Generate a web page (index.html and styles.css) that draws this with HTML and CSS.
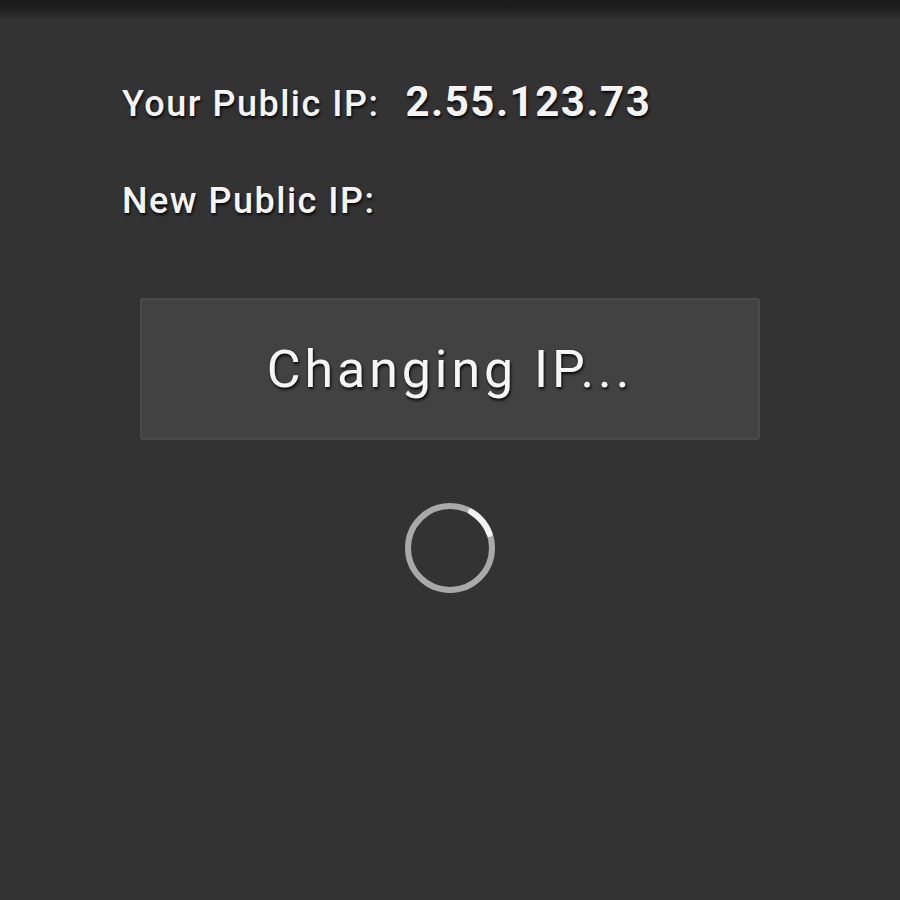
FILE: index.html
```html
<!DOCTYPE html>
<html>
<head>
<meta charset="utf-8">
<link rel="stylesheet" href="styles.css">
</head>
<body>
<div class="statusbar"></div>
<main class="content">
  <div class="row row-first">
    <span class="label">Your Public IP:</span>
    <span class="ip">2.55.123.73</span>
  </div>
  <div class="row row-second">
    <span class="label">New Public IP:</span>
  </div>
  <div class="button-wrap">
    <div class="button">Changing IP...</div>
  </div>
  <div class="spinner-wrap">
    <svg class="spinner" width="100" height="100" viewBox="0 0 100 100">
      <circle cx="50" cy="50" r="42" fill="none" stroke="#a9a9a9" stroke-width="6"/>
      <path d="M 71 13.6 A 42 42 0 0 1 89.5 36" fill="none" stroke="#f2f2f2" stroke-width="6" stroke-linecap="round"/>
    </svg>
  </div>
</main>
</body>
</html>
```
FILE: styles.css
```css
html, body {
  margin: 0;
  padding: 0;
  background: #333333;
  width: 900px;
  height: 900px;
  overflow: hidden;
}
body {
  font-family: Roboto, "Noto Sans", sans-serif;
  color: #f4f4f4;
}
.statusbar {
  height: 20px;
  background: linear-gradient(to bottom, #1c1c1c 0px, #1d1d1d 8px, #333333 20px);
}
.content {
  padding-left: 122px;
}
.row {
  display: flex;
  align-items: baseline;
  text-shadow: 1px 2px 3px rgba(0,0,0,0.9);
}
.row-first {
  margin-top: 57px;
  height: 48px;
}
.row-second {
  margin-top: 55px;
  height: 48px;
}
.label {
  font-size: 36px;
  letter-spacing: 1.5px;
  font-weight: 500;
}
.ip {
  font-size: 42px;
  font-weight: bold;
  letter-spacing: 1.5px;
  margin-left: 26px;
}
.button-wrap {
  margin-top: 70px;
  padding-left: 18px;
}
.button {
  width: 620px;
  height: 142px;
  background: #424242;
  border: 2px solid #4a4a4a;
  border-radius: 3px;
  display: flex;
  align-items: center;
  justify-content: center;
  font-size: 52px;
  letter-spacing: 3.9px;
  color: #f6f6f6;
  text-shadow: 1px 2px 3px rgba(0,0,0,0.9);
  box-sizing: border-box;
}
.spinner-wrap {
  margin-top: 58px;
  padding-left: 278px;
}
.spinner {
  display: block;
}
```
